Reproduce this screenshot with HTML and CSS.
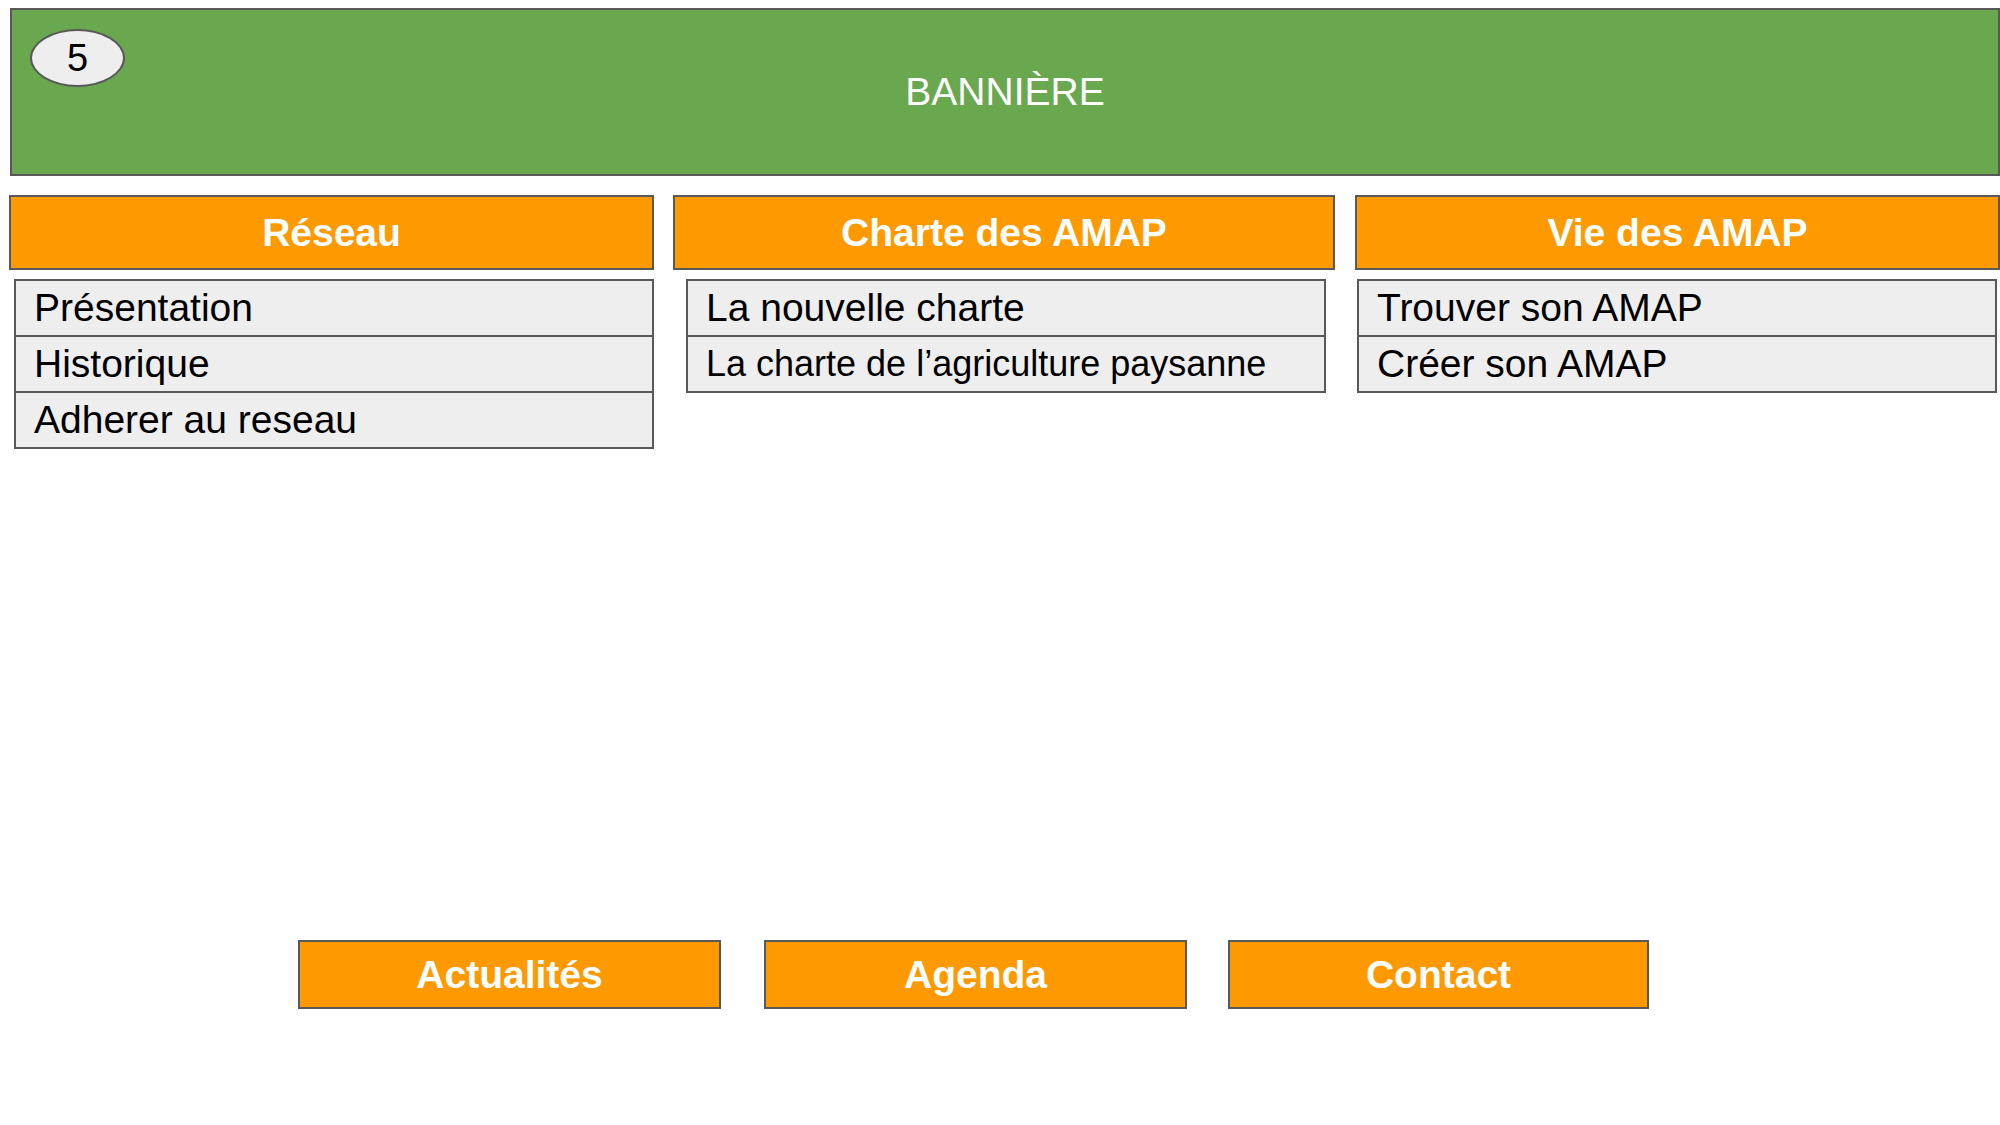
FILE: index.html
```html
<!DOCTYPE html>
<html lang="fr">
<head>
<meta charset="utf-8">
<title>Maquette</title>
<link rel="stylesheet" href="styles.css">
</head>
<body>
<div class="page">
  <header class="banner">
    <div class="badge">5</div>
    <span class="banner-title">BANNIÈRE</span>
  </header>
  <nav class="menu">
    <div class="col col-1">
      <div class="head">Réseau</div>
      <ul class="items">
        <li>Présentation</li>
        <li>Historique</li>
        <li>Adherer au reseau</li>
      </ul>
    </div>
    <div class="col col-2">
      <div class="head">Charte des AMAP</div>
      <ul class="items">
        <li>La nouvelle charte</li>
        <li class="small">La charte de l’agriculture paysanne</li>
      </ul>
    </div>
    <div class="col col-3">
      <div class="head">Vie des AMAP</div>
      <ul class="items">
        <li>Trouver son AMAP</li>
        <li>Créer son AMAP</li>
      </ul>
    </div>
  </nav>
  <div class="bottom">
    <div class="btn">Actualités</div>
    <div class="btn">Agenda</div>
    <div class="btn btn-last">Contact</div>
  </div>
</div>
</body>
</html>
```

FILE: styles.css
```css
* { box-sizing: border-box; }
html, body { margin: 0; padding: 0; background: #ffffff; }
body { font-family: "Liberation Sans", Arial, sans-serif; width: 2000px; height: 1125px; overflow: hidden; }

.page { padding-top: 8px; }

.banner {
  position: relative;
  margin-left: 10px;
  width: 1990px;
  height: 168px;
  background: #6aa84f;
  border: 2px solid #595959;
  display: flex;
  align-items: center;
  justify-content: center;
}
.banner-title { color: #ffffff; font-size: 39px; }
.badge {
  position: absolute;
  left: 18px;
  top: 19px;
  width: 95px;
  height: 58px;
  border-radius: 50%;
  background: #eeeeee;
  border: 2px solid #595959;
  display: flex;
  align-items: center;
  justify-content: center;
  font-size: 38px;
  color: #000;
}

.menu {
  display: flex;
  margin-top: 19px;
  padding-left: 9px;
}
.col { display: flex; flex-direction: column; }
.col-1 { width: 645px; }
.col-2 { width: 662px; margin-left: 19px; }
.col-3 { width: 645px; margin-left: 20px; }

.head {
  height: 75px;
  background: #ff9900;
  border: 2px solid #595959;
  color: #ffffff;
  font-weight: bold;
  font-size: 39px;
  display: flex;
  align-items: center;
  justify-content: center;
}

.items {
  list-style: none;
  margin: 9px 0 0 0;
  padding: 0;
  width: 640px;
}
.col-1 .items { margin-left: 5px; }
.col-2 .items { margin-left: 13px; }
.col-3 .items { margin-left: 2px; }
.items li {
  height: 58px;
  background: #eeeeee;
  border: 2px solid #595959;
  margin-top: -2px;
  font-size: 39px;
  color: #000;
  display: flex;
  align-items: center;
  padding-left: 18px;
}
.items li.small { font-size: 36px; }
.items li:first-child { margin-top: 0; }

.bottom {
  display: flex;
  gap: 43px;
  margin-top: 491px;
  padding-left: 298px;
}
.btn {
  width: 423px;
  height: 69px;
  background: #ff9900;
  border: 2px solid #595959;
  color: #ffffff;
  font-weight: bold;
  font-size: 39px;
  display: flex;
  align-items: center;
  justify-content: center;
}
.btn-last { margin-left: -2px; width: 421px; }
```
